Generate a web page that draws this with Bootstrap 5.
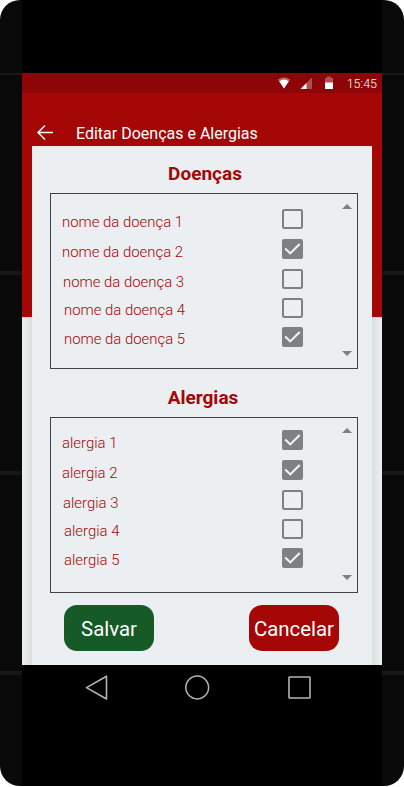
<!DOCTYPE html>
<html lang="pt-BR">
<head>
<meta charset="utf-8">
<meta name="viewport" content="width=device-width, initial-scale=1">
<title>Editar Doenças e Alergias</title>
<link href="https://cdn.jsdelivr.net/npm/bootstrap@5.3.0/dist/css/bootstrap.min.css" rel="stylesheet">
<style>
  body { font-family: Roboto, "Liberation Sans", sans-serif; background: #fff; line-height: 1; }
  .phone { width: 404px; height: 786px; border-radius: 20px; padding: 0 22px; background:
    linear-gradient(#191919, #191919) 0 73px / 100% 2px no-repeat,
    linear-gradient(#171717, #171717) 0 271px / 100% 4px no-repeat,
    linear-gradient(#171717, #171717) 0 471px / 100% 4px no-repeat,
    linear-gradient(#171717, #171717) 0 671px / 100% 4px no-repeat, #090909; }
  .device { background: #000; padding-top: 73px; }
  .app { height: 592px; background:
    linear-gradient(#a50606 244px, #cfd1d1 244px, #cfd1d100 246px),
    linear-gradient(90deg, #ebeff0, #e4e8e9 5px, #d9dddd 10px, #d9dddd 350px, #e4e8e9 355px, #ebeff0); }
  .status { height: 20px; background: #8d0507; color: #fff; font-size: 12.5px; font-weight: 300; padding-right: 5px; }
  .status svg { display: block; margin-right: 14px; }
  .status span { padding-top: 2px; }
  .topbar { height: 53px; padding: 26px 0 0 14px; color: #fff; font-size: 16px; }
  .title { margin-left: 22px; padding-top: 2px; }
  .sheet { height: 519px; margin: 0 10px; padding: 0 14px 0 18px; background: #ebeff1; }
  .heading { height: 47px; padding: 18px 0 0 2px; font-size: 19px; font-weight: 700; color: #a50606; margin: 0; text-align: center; line-height: 20px; }
  .heading.second { height: 48px; padding: 19px 2px 0 0; }
  .pick { height: 176px; border: 1px solid #414244; padding: 10px 5px 0 11px; }
  .pick.second { padding-top: 7px; }
  .line { height: 30px; font-size: 14.9px; font-weight: 300; color: #a50606; padding-right: 39px; }
  .line.tight { height: 29px; }
  .line span { padding-top: 7px; }
  .line.third span { padding-left: 1px; }
  .line.tight span { padding: 3px 0 0 2px; }
  .line svg, .arrows svg { display: block; }
  .line.tight svg { margin-bottom: 1px; }
  .arrows { height: 152px; width: 10px; }
  .second .arrows { margin-top: 3px; }
  .actions { padding: 12px 19px 0 14px; }
  .action { width: 90px; height: 46px; border-radius: 13px; border: 0; padding: 2px 0 0; color: #fff; font-size: 20.4px; line-height: 1; }
  .save { background: #165a28; } .cancel { background: #a50606; }
  .keys { height: 121px; padding: 10px 71px 0 63px; }
</style>
<script src="https://cdn.jsdelivr.net/npm/bootstrap@5.3.0/dist/js/bootstrap.bundle.min.js"></script>
</head>
<body>
<svg width="0" height="0" class="position-absolute" aria-hidden="true">
  <symbol id="off" viewBox="0 0 21 20"><rect x="1" y="1" width="19" height="18" rx="1.3" fill="none" stroke="#808080" stroke-width="2"/></symbol>
  <symbol id="on" viewBox="0 0 21 20"><rect width="21" height="20" rx="2" fill="#808080"/><path d="M3.2 9.6 8.2 14.4 17.7 4.9" fill="none" stroke="#f2f5f8" stroke-width="2.1"/></symbol>
  <symbol id="up" viewBox="0 0 10 5"><path d="M0 5 5 0l5 5z" fill="#808080"/></symbol>
  <symbol id="down" viewBox="0 0 10 5"><path d="M0 0h10L5 5z" fill="#808080"/></symbol>
</svg>
<main class="phone overflow-hidden">
  <div class="device">
    <div class="app overflow-hidden">
      <div class="status d-flex align-items-center justify-content-end">
        <svg width="55" height="20" viewBox="0 0 55 20">
          <path d="M0 6.5Q6 2.5 12 6.5L6 15.5z" fill="#b96668"/><path d="M1.2 8.2Q6 5 10.8 8.2L6 15.5z" fill="#fff"/>
          <path d="M22.5 16 34 4.5V16z" fill="#ae5052"/><path d="M22.5 16 28.5 10v6z" fill="#fff"/>
          <path d="M49 3.5h4V5h2v5h-8V5h2z" fill="#ae5052"/><path d="M47 9.5h8V16h-8z" fill="#fff"/>
        </svg>
        <span>15:45</span>
      </div>
      <header class="topbar d-flex align-items-center">
        <svg width="18" height="16" viewBox="0 0 18 16"><path d="M17 7.5H2M9 .5l-7 7 7 7" fill="none" stroke="#fff" stroke-width="1.5"/></svg>
        <span class="title">Editar Doenças e Alergias</span>
      </header>
      <section class="sheet">
        <h1 class="heading">Doenças</h1>
        <div class="pick d-flex">
          <div class="flex-grow-1">
            <div class="line d-flex justify-content-between align-items-center"><span>nome da doença 1</span><svg width="21" height="20"><use href="#off"/></svg></div>
            <div class="line d-flex justify-content-between align-items-center"><span>nome da doença 2</span><svg width="21" height="20"><use href="#on"/></svg></div>
            <div class="line third d-flex justify-content-between align-items-center"><span>nome da doença 3</span><svg width="21" height="20"><use href="#off"/></svg></div>
            <div class="line tight d-flex justify-content-between align-items-center"><span>nome da doença 4</span><svg width="21" height="20"><use href="#off"/></svg></div>
            <div class="line tight d-flex justify-content-between align-items-center"><span>nome da doença 5</span><svg width="21" height="20"><use href="#on"/></svg></div>
          </div>
          <div class="arrows d-flex flex-column justify-content-between"><svg width="10" height="5"><use href="#up"/></svg><svg width="10" height="5"><use href="#down"/></svg></div>
        </div>
        <h2 class="heading second">Alergias</h2>
        <div class="pick second d-flex">
          <div class="flex-grow-1">
            <div class="line d-flex justify-content-between align-items-center"><span>alergia 1</span><svg width="21" height="20"><use href="#on"/></svg></div>
            <div class="line d-flex justify-content-between align-items-center"><span>alergia 2</span><svg width="21" height="20"><use href="#on"/></svg></div>
            <div class="line third d-flex justify-content-between align-items-center"><span>alergia 3</span><svg width="21" height="20"><use href="#off"/></svg></div>
            <div class="line tight d-flex justify-content-between align-items-center"><span>alergia 4</span><svg width="21" height="20"><use href="#off"/></svg></div>
            <div class="line tight d-flex justify-content-between align-items-center"><span>alergia 5</span><svg width="21" height="20"><use href="#on"/></svg></div>
          </div>
          <div class="arrows d-flex flex-column justify-content-between"><svg width="10" height="5"><use href="#up"/></svg><svg width="10" height="5"><use href="#down"/></svg></div>
        </div>
        <div class="actions d-flex justify-content-between">
          <button class="btn action save">Salvar</button>
          <button class="btn action cancel">Cancelar</button>
        </div>
      </section>
    </div>
    <nav class="keys d-flex justify-content-between align-items-start">
      <svg width="24" height="26" viewBox="0 0 24 26"><path d="M21.5 1.2v22.8L1.5 12.6z" fill="none" stroke="#b4b4b4" stroke-width="1.6" stroke-linejoin="round"/></svg>
      <svg width="26" height="26" viewBox="0 0 26 26"><circle cx="12.2" cy="12.5" r="11.4" fill="none" stroke="#b4b4b4" stroke-width="1.5"/></svg>
      <svg width="24" height="26" viewBox="0 0 24 26"><rect x="2" y="2" width="21" height="21" rx=".6" fill="none" stroke="#b4b4b4" stroke-width="1.6"/></svg>
    </nav>
  </div>
</main>
</body>
</html>
